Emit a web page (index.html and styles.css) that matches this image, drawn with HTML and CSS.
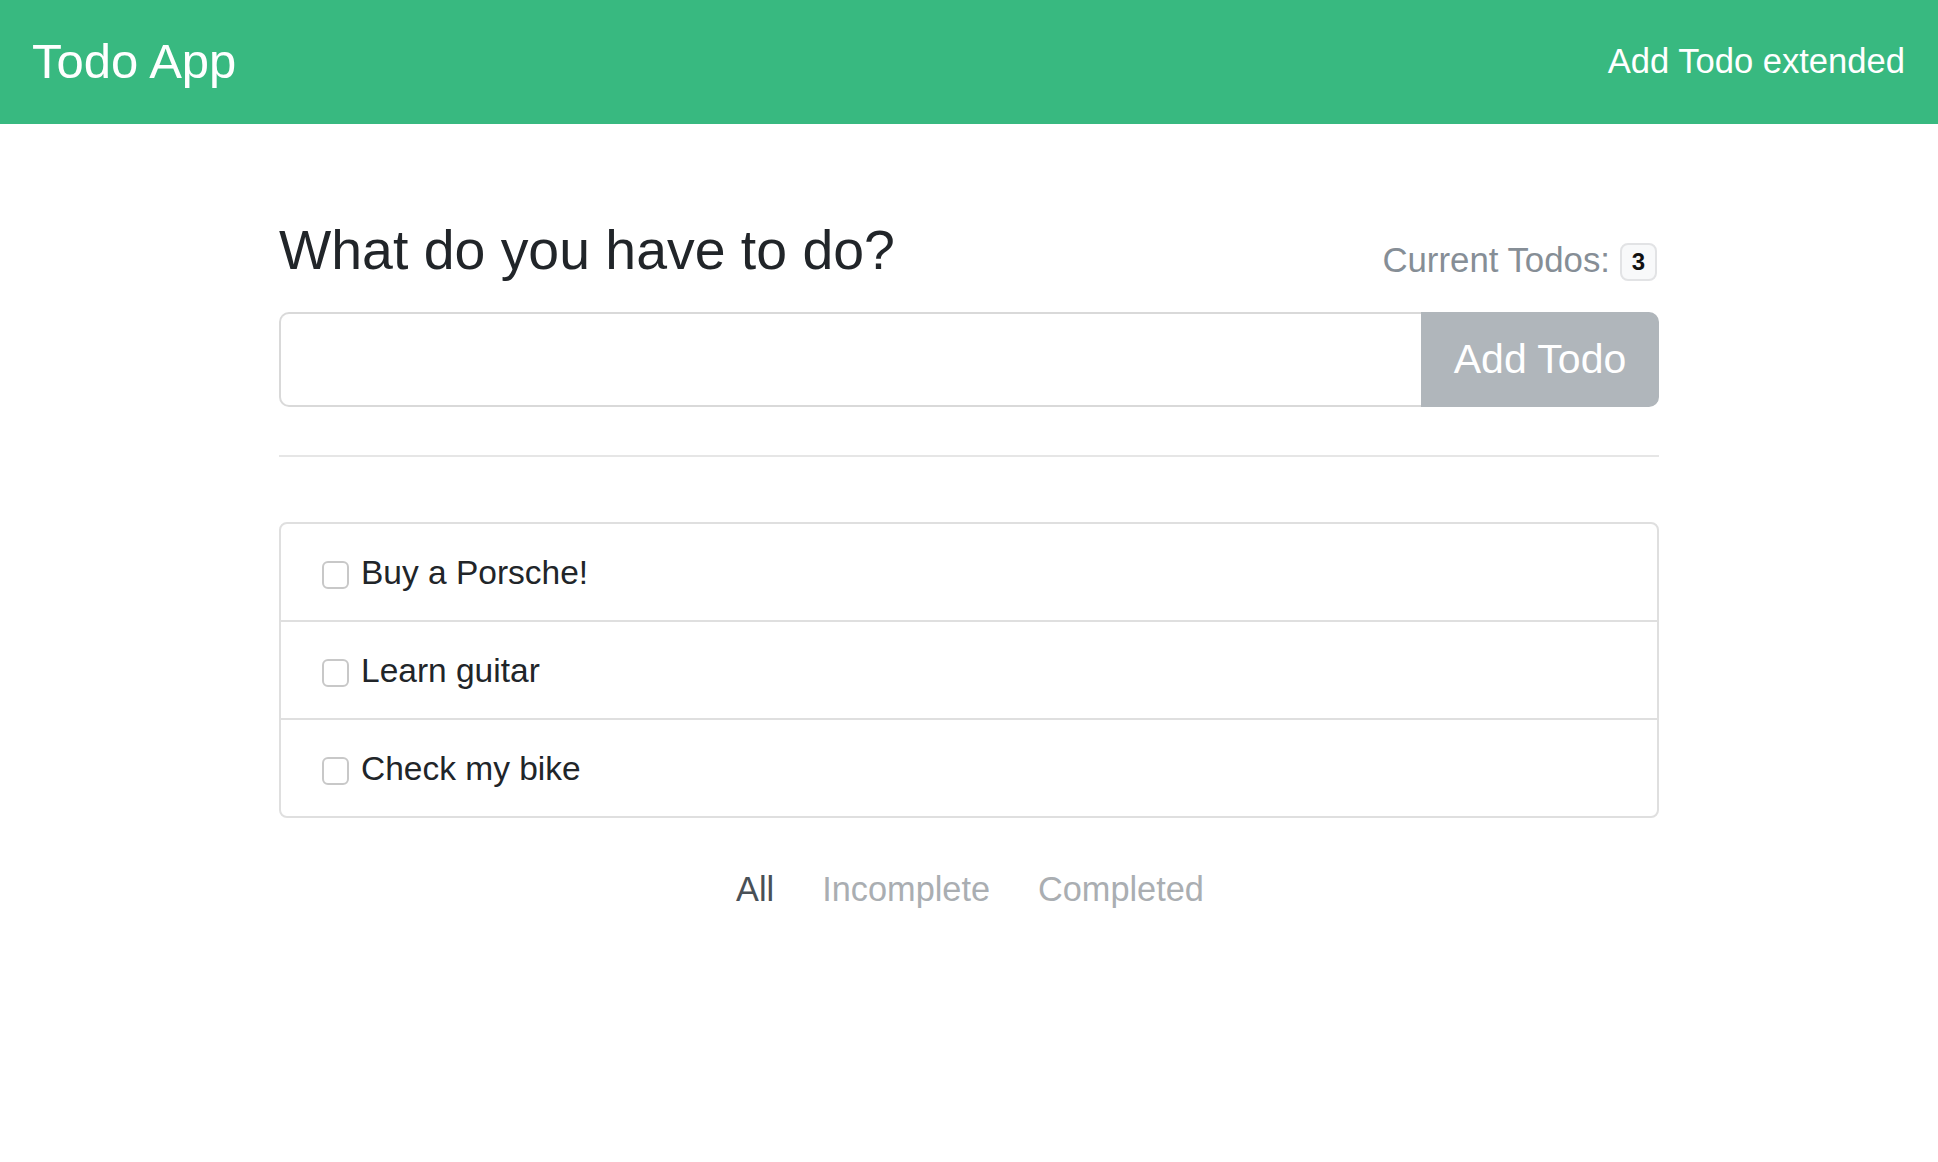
FILE: index.html
```html
<!DOCTYPE html>
<html lang="en">
<head>
<meta charset="utf-8">
<title>Todo App</title>
<link rel="stylesheet" href="styles.css">
</head>
<body>
<nav class="navbar">
  <a class="brand" href="#">Todo App</a>
  <a class="nav-link" href="#">Add Todo extended</a>
</nav>
<main class="container">
  <div class="title-row">
    <h3 class="title">What do you have to do?</h3>
    <div class="count">Current Todos: <span class="badge">3</span></div>
  </div>
  <form class="input-group">
    <input class="todo-input" type="text">
    <button class="add-btn" type="button">Add Todo</button>
  </form>
  <hr class="divider">
  <ul class="todo-list">
    <li class="todo-item"><input type="checkbox" class="check"><span class="todo-text">Buy a Porsche!</span></li>
    <li class="todo-item"><input type="checkbox" class="check"><span class="todo-text">Learn guitar</span></li>
    <li class="todo-item"><input type="checkbox" class="check"><span class="todo-text">Check my bike</span></li>
  </ul>
  <nav class="filters">
    <a class="filter active" href="#">All</a>
    <a class="filter" href="#">Incomplete</a>
    <a class="filter" href="#">Completed</a>
  </nav>
</main>
</body>
</html>
```
FILE: styles.css
```css
* { box-sizing: border-box; }
body {
  margin: 0;
  font-family: "Liberation Sans", Arial, sans-serif;
  color: #212529;
  background: #fff;
}
a { text-decoration: none; }

.navbar {
  height: 124px;
  background: #38b980;
  display: flex;
  align-items: center;
  justify-content: space-between;
  padding: 0 33px 0 32px;
}
.brand {
  color: #fff;
  font-size: 49px;
  line-height: 1.5;
}
.nav-link {
  color: #fff;
  font-size: 34.6px;
  line-height: 1.5;
}

.container {
  width: 1380px;
  margin: 0 auto;
  padding-top: 93px;
}
.title-row {
  display: flex;
  justify-content: space-between;
  align-items: flex-end;
  margin-bottom: 29px;
}
.title {
  margin: 0;
  font-size: 55.4px;
  font-weight: 400;
  line-height: 1.2;
  color: #212529;
}
.count {
  font-size: 34.8px;
  line-height: 46.5px;
  color: #868e96;
  margin-right: 2px;
}
.badge {
  display: inline-block;
  vertical-align: 2px;
  font-size: 24px;
  font-weight: 700;
  line-height: 1;
  color: #111;
  background: #f8f9fa;
  border: 2px solid #e2e3e5;
  border-radius: 8px;
  padding: 5px 10px;
  margin-left: 0;
}

.input-group {
  display: flex;
  height: 95px;
  margin: 0;
}
.todo-input {
  flex: 1;
  border: 2px solid #d9d9d9;
  border-right: none;
  border-radius: 10px 0 0 10px;
  font-size: 38px;
  padding: 0 30px;
  outline: none;
  font-family: inherit;
}
.add-btn {
  width: 238px;
  border: 2px solid #b0b6bb;
  background: #b0b6bb;
  color: #fff;
  font-family: inherit;
  font-size: 41px;
  border-radius: 0 10px 10px 0;
  padding: 0;
}

.divider {
  margin: 48px 0 0;
  border: 0;
  border-top: 2px solid #e6e6e6;
  height: 0;
}

.todo-list {
  list-style: none;
  margin: 65px 0 0;
  padding: 0;
  border: 2px solid #dfdfdf;
  border-radius: 8px;
}
.todo-item {
  display: flex;
  align-items: center;
  padding: 25px 40px 23px 41px;
  font-size: 33.5px;
  line-height: 48px;
  color: #212529;
}
.todo-item + .todo-item {
  border-top: 2px solid #dfdfdf;
}
.check {
  -webkit-appearance: none;
  appearance: none;
  width: 27px;
  height: 28px;
  margin: 4px 12px 0 0;
  border: 2px solid #c8c8c8;
  border-radius: 6px;
  background: #fff;
  flex: none;
}

.filters {
  display: flex;
  justify-content: center;
  gap: 48px;
  margin-top: 46px;
  padding-left: 2px;
}
.filter {
  font-size: 34.3px;
  line-height: 1.5;
  color: #aaaeb2;
}
.filter.active {
  color: #495057;
}
```
